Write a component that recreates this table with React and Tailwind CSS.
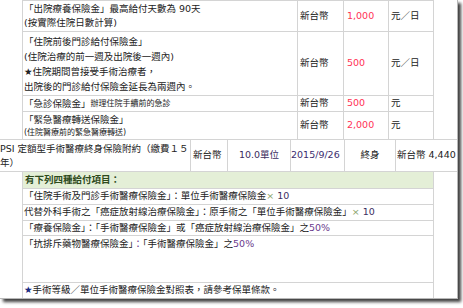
export default function App() {
  const b = "border-[#d4d4d4]";
  const red = "text-[#ff3355]";
  return (
    <div className="w-[463px] h-[308px] bg-white text-[#222] text-[9.5px] font-['DejaVu_Sans','Noto_Sans_CJK_TC',sans-serif] overflow-hidden">
      <div className="w-[458px] h-[299px] border-r border-b border-[#b8b8b8] shadow-[3px_3px_3px_rgba(0,0,0,0.75)] overflow-hidden flex flex-col bg-white">
        {/* Section 1 */}
        <div className="flex">
          <div className="w-[22px] shrink-0" />
          <div className={`flex flex-col border-l border-t ${b}`}>
            <div className={`flex h-[31px] border-b ${b}`}>
              <div className={`w-[275px] border-r ${b} pl-[1px] flex flex-col justify-center leading-[14px]`}>
                <div>「出院療養保險金」最高給付天數為 90天</div>
                <div>(按實際住院日數計算)</div>
              </div>
              <div className={`w-[46px] border-r ${b} pl-[2px] flex items-center`}>新台幣</div>
              <div className={`w-[45px] border-r ${b} pl-[3px] flex items-center ${red}`}>1,000</div>
              <div className={`w-[45px] border-r ${b} pl-[2px] flex items-center`}>元／日</div>
            </div>
            <div className={`flex h-[64px] border-b ${b}`}>
              <div className={`w-[275px] border-r ${b} pl-[1px] flex flex-col justify-center leading-[15px]`}>
                <div>「住院前後門診給付保險金」</div>
                <div>(住院治療的前一週及出院後一週內)</div>
                <div>★住院期間曾接受手術治療者，</div>
                <div>出院後的門診給付保險金延長為兩週內。</div>
              </div>
              <div className={`w-[46px] border-r ${b} pl-[2px] flex items-center`}>新台幣</div>
              <div className={`w-[45px] border-r ${b} pl-[3px] flex items-center ${red}`}>500</div>
              <div className={`w-[45px] border-r ${b} pl-[2px] flex items-center`}>元／日</div>
            </div>
            <div className={`flex h-[16px] border-b ${b}`}>
              <div className={`w-[275px] border-r ${b} pl-[1px] flex items-center leading-[14px] whitespace-nowrap`}>
                <span>「急診保險金」</span>
                <span className="text-[8px]">辦理住院手續前的急診</span>
              </div>
              <div className={`w-[46px] border-r ${b} pl-[2px] flex items-center`}>新台幣</div>
              <div className={`w-[45px] border-r ${b} pl-[3px] flex items-center ${red}`}>500</div>
              <div className={`w-[45px] border-r ${b} pl-[2px] flex items-center`}>元</div>
            </div>
            <div className="flex h-[27px]">
              <div className={`w-[275px] border-r ${b} pl-[1px] flex flex-col justify-center leading-[13px]`}>
                <div>「緊急醫療轉送保險金」</div>
                <div className="text-[8px]">(住院醫療前的緊急醫療轉送)</div>
              </div>
              <div className={`w-[46px] border-r ${b} pl-[2px] flex items-center`}>新台幣</div>
              <div className={`w-[45px] border-r ${b} pl-[3px] flex items-center ${red}`}>2,000</div>
              <div className={`w-[45px] border-r ${b} pl-[2px] flex items-center`}>元</div>
            </div>
          </div>
          <div className="flex-1" />
        </div>

        {/* PSI row */}
        <div className={`flex h-[33px] border-t border-b ${b}`}>
          <div className={`w-[191px] border-r ${b} flex flex-col justify-center leading-[14px] whitespace-nowrap overflow-hidden`}>
            <div>PSI 定額型手術醫療終身保險附約（繳費１５</div>
            <div>年）</div>
          </div>
          <div className={`w-[37px] border-r ${b} pl-[2px] flex items-center`}>新台幣</div>
          <div className={`w-[63px] border-r ${b} flex items-center justify-center text-[#3b2d5e]`}>10.0單位</div>
          <div className={`w-[54px] border-r ${b} flex items-center text-[#3b2d6e]`}>2015/9/26</div>
          <div className={`w-[51px] border-r ${b} flex items-center justify-center`}>終身</div>
          <div className="flex-1 pl-[1px] flex items-center whitespace-nowrap">新台幣 4,440</div>
        </div>

        {/* Section 3 */}
        <div className="flex flex-1">
          <div className="w-[22px] shrink-0" />
          <div className={`w-[412px] flex flex-col border-l border-r ${b}`}>
            <div className={`h-[17px] border-b ${b} bg-[#e4efd7] pl-[2px] flex items-center font-bold text-[#2e4a1c]`}>有下列四種給付項目：</div>
            <div className={`h-[16px] border-b ${b} pl-[1px] flex items-center whitespace-nowrap`}>
              「住院手術及門診手術醫療保險金」：單位手術醫療保險金<span className="text-[#8aa36a]">×</span>&nbsp;<span className="text-[#3b2d5e]">10</span>
            </div>
            <div className={`h-[16px] border-b ${b} pl-[1px] flex items-center whitespace-nowrap`}>
              代替外科手術之「癌症放射線治療保險金」：原手術之「單位手術醫療保險金」<span className="text-[#8aa36a]">×</span>&nbsp;<span className="text-[#3b2d5e]">10</span>
            </div>
            <div className={`h-[15px] border-b ${b} pl-[1px] flex items-center whitespace-nowrap`}>
              「療養保險金」：「手術醫療保險金」或「癌症放射線治療保險金」之<span className="text-[#6b3a8c]">50%</span>
            </div>
            <div className={`h-[47px] border-b ${b} pl-[1px] pt-[1px] leading-[14px] whitespace-nowrap`}>
              「抗排斥藥物醫療保險金」<span className="text-[#6b3a8c]">：</span>「手術醫療保險金」之<span className="text-[#6b3a8c]">50%</span>
            </div>
            <div className="flex-1 pl-[1px] flex items-center whitespace-nowrap">
              <span className="text-[#1a2a80]">★</span>手術等級／單位手術醫療保險金對照表，請參考保單條款。
            </div>
          </div>
          <div className="flex-1" />
        </div>
      </div>
    </div>
  );
}
